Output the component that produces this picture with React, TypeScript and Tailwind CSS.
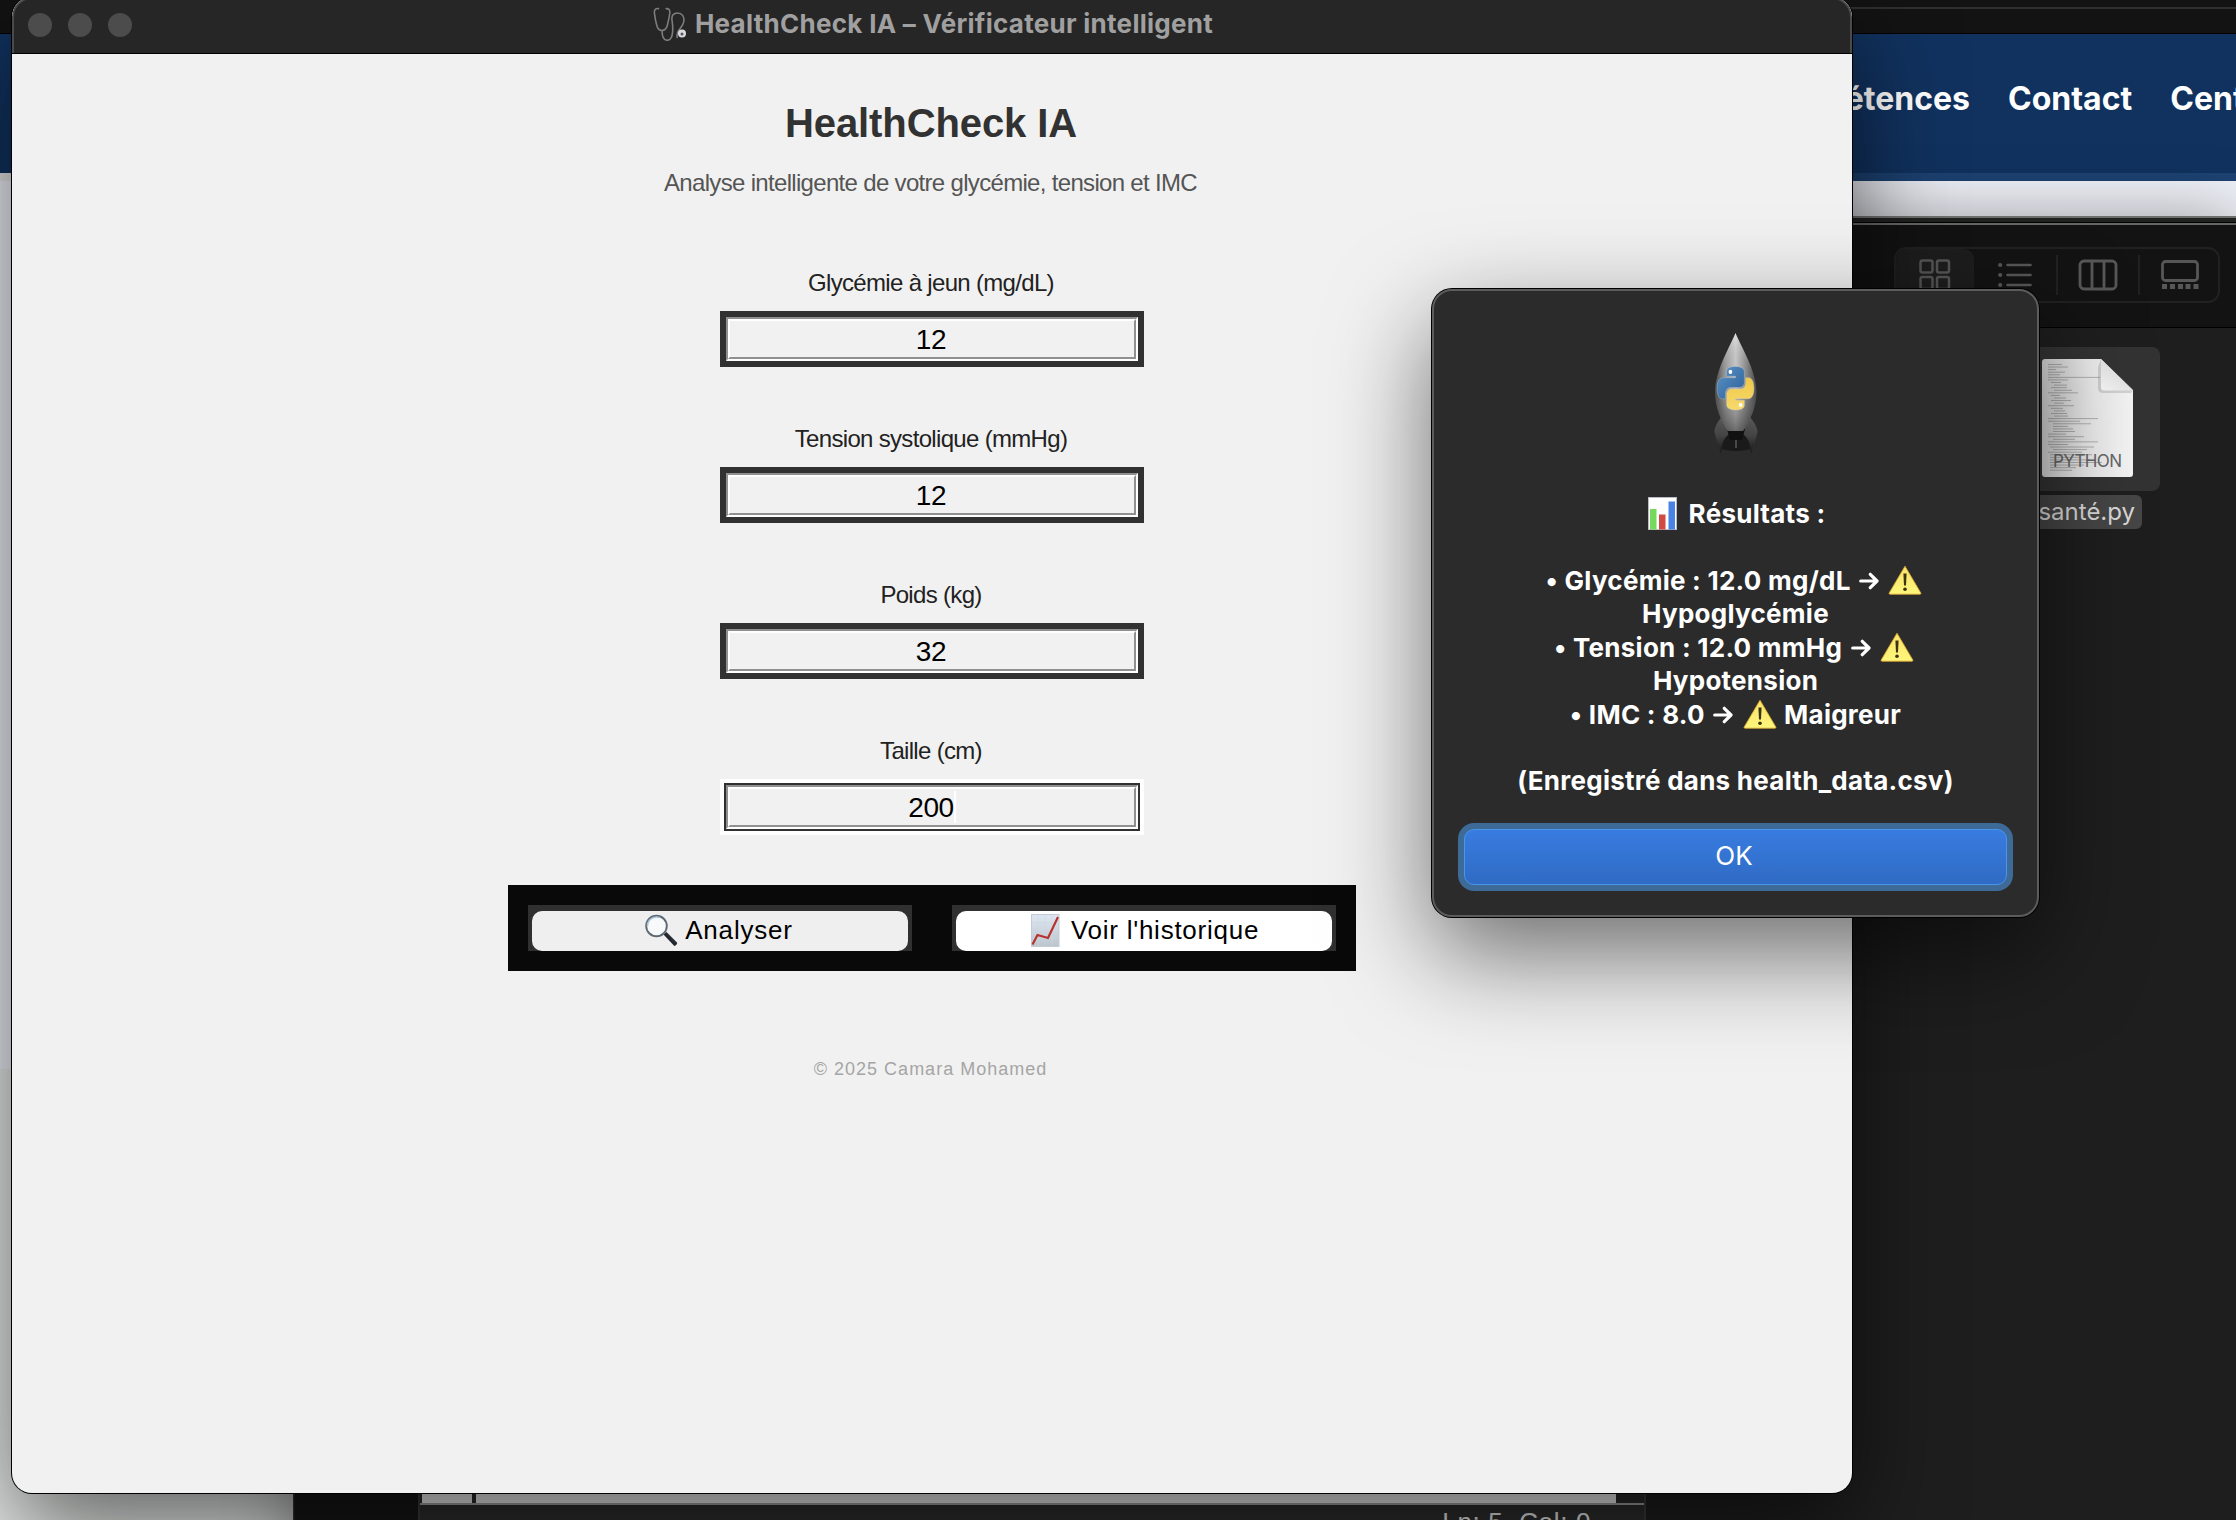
import type { ReactNode } from 'react';

const helv = "font-['Liberation_Sans',Arial,sans-serif]";
const inter = "font-['Inter',sans-serif]";

function Stethoscope() {
  return (
    <svg width="34" height="34" viewBox="0 0 34 34" fill="none" className="-mt-[1px] shrink-0">
      <g stroke="#7d7d7d" strokeWidth="1.6" strokeLinecap="round">
        <path d="M5.500 1.600C2.500 1.200 1 3 1.400 6c.6 4 1 8 2.300 12 .8 3.500 3 5.500 5.200 5.500 2.500 0 4.700-2 5.500-5.500 1-4.500 2-8 2.400-12 .3-3-1-4.600-3.600-4.400" />
        <path d="M9.200 23.500c-.4 6 1.600 9.800 5 9.800 3.300 0 5-3 5.400-8.300.4-5 0-8-.6-12-.6-4.500 1.500-7 5.500-7 4.500 0 7 3.500 6.300 8.500-.6 4-3.500 6-5.400 9.500-1.600 3-1.600 4.500-1.200 6.500" />
      </g>
      <circle cx="29" cy="26.500" r="4" fill="#d9dade" />
      <circle cx="29" cy="27" r="1.500" fill="#55575e" />
    </svg>
  );
}

function Magnifier() {
  return (
    <svg width="33" height="33" viewBox="0 0 33 33" fill="none" className="shrink-0">
      <defs>
        <linearGradient id="handle" x1="0" y1="1" x2="1" y2="0">
          <stop offset="0" stopColor="#05070c" />
          <stop offset=".6" stopColor="#2b3038" />
          <stop offset="1" stopColor="#767c86" />
        </linearGradient>
      </defs>
      <path d="M18.500 20.500l3-2.500 10.500 10.500c.8 1-1.700 4-2.900 3.300z" fill="url(#handle)" />
      <circle cx="11.500" cy="12" r="10.300" fill="#f7f9fa" stroke="#5d6a75" strokeWidth="1.900" />
      <path d="M2.500 12a9 9 0 0 1 12-8.500" stroke="#a9c4d8" strokeWidth="1.500" />
    </svg>
  );
}

function TrendChart() {
  return (
    <svg width="29" height="33" viewBox="0 0 29 33" fill="none" className="shrink-0">
      <defs>
        <linearGradient id="sheet" x1="0" y1="0" x2="0" y2="1">
          <stop offset="0" stopColor="#dfe8f2" />
          <stop offset="1" stopColor="#bcc4cc" />
        </linearGradient>
      </defs>
      <rect x=".5" y=".5" width="27.500" height="32" fill="url(#sheet)" stroke="#c3ccd6" />
      <path d="M7 1v31M14 1v31M21 1v31M1 8.500h27M1 16.500h27M1 24.500h27" stroke="#ccd6e0" strokeWidth=".5" />
      <path d="M1.500 30.500L6.500 21l10.500 3L27 3" stroke="#b8332f" strokeWidth="2.200" />
    </svg>
  );
}

function BarChart() {
  return (
    <svg width="29" height="33" viewBox="0 0 29 33" className="shrink-0">
      <rect x=".5" y=".5" width="28" height="32" fill="#fff" stroke="#b9bcc2" />
      <rect x="2" y="12" width="6.500" height="20.500" fill="#76d85d" />
      <rect x="11" y="17.500" width="6.500" height="15" fill="#d14b43" />
      <rect x="20.500" y="4.500" width="6.500" height="28" fill="#4a83e6" />
    </svg>
  );
}

function Warning() {
  return (
    <svg width="34" height="30" viewBox="0 0 34 30" className="mx-[1px] inline-block align-[-5px]">
      <defs>
        <linearGradient id="warn" x1="0" y1="0" x2="0" y2="1">
          <stop offset="0" stopColor="#fbe36a" />
          <stop offset="1" stopColor="#fff67c" />
        </linearGradient>
      </defs>
      <path d="M17 1.200L32.800 28a.8.8 0 0 1-.7 1.200H1.900a.8.8 0 0 1-.7-1.200z" fill="url(#warn)" stroke="#d9a932" strokeWidth=".9" strokeLinejoin="round" />
      <path d="M15.400 8.500h3.200l-.6 12h-2z" fill="#3a3412" />
      <circle cx="17" cy="24.300" r="1.800" fill="#3a3412" />
    </svg>
  );
}

function Arrow() {
  return (
    <svg width="20" height="18" viewBox="0 0 20 18" fill="none" stroke="#fff" strokeWidth="3.200" strokeLinecap="round" strokeLinejoin="round" className="mx-[2px] inline-block align-[0px]">
      <path d="M1.700 9h16M11.300 2.300L18 9l-6.700 6.700" />
    </svg>
  );
}

function Rocket() {
  return (
    <svg width="48" height="124" viewBox="0 0 48 124">
      <defs>
        <linearGradient id="hull" x1="0" y1="0" x2="1" y2="0">
          <stop offset="0" stopColor="#4a4a4a" />
          <stop offset=".25" stopColor="#9b9b9b" />
          <stop offset=".5" stopColor="#c9c9c9" />
          <stop offset=".7" stopColor="#979797" />
          <stop offset="1" stopColor="#484848" />
        </linearGradient>
        <linearGradient id="shade" x1="0" y1="0" x2="0" y2="1">
          <stop offset="0" stopColor="#fff" stopOpacity=".45" />
          <stop offset=".4" stopColor="#888" stopOpacity="0" />
          <stop offset="1" stopColor="#111" stopOpacity=".5" />
        </linearGradient>
        <linearGradient id="fin" x1="0" y1="0" x2="0" y2="1">
          <stop offset="0" stopColor="#585858" />
          <stop offset=".5" stopColor="#444" />
          <stop offset="1" stopColor="#161616" />
        </linearGradient>
        <linearGradient id="blue" x1="0" y1="0" x2="1" y2="1">
          <stop offset="0" stopColor="#5b94c8" />
          <stop offset="1" stopColor="#2d5f96" />
        </linearGradient>
        <linearGradient id="gold" x1="0" y1="0" x2="0" y2="1">
          <stop offset="0" stopColor="#efc84a" />
          <stop offset="1" stopColor="#f7da6a" />
        </linearGradient>
      </defs>
      <path d="M10 100h28l2 16c-6 4-26 4-32 0z" fill="#1a1a1a" />
      <path d="M9.500 85C5 91 2 96 2.500 100.500c1.500 7 4 13 6.500 21.500 1.500-9 .5-14 8-20l-1-4zM38 85c4.500 6 8 11 7.500 15.500-1.500 7-4 13-6.500 21.500-1.500-9-.5-14-8-20l1-4z" fill="url(#fin)" />
      <path d="M15 97h18l-3 11H18z" fill="#111" />
      <path d="M24 108v8" stroke="#5a5a5a" strokeWidth="1.500" />
      <path d="M23.500 1C19 13 3 38 3 60c0 16 6 28 13 39h15C38 88 44.500 76 44.500 60 44.500 38 28 13 23.500 1z" fill="url(#hull)" />
      <path d="M23.500 1C19 13 3 38 3 60c0 16 6 28 13 39h15C38 88 44.500 76 44.500 60 44.500 38 28 13 23.500 1z" fill="url(#shade)" />
      <g transform="translate(5 34.500) scale(.335 .395)" stroke="#c8cbd0" strokeWidth="1.500" strokeOpacity=".6">
        <path fill="url(#blue)" d="M54.900 0C26.900 0 28.600 12.100 28.600 12.100v12.600h26.700v3.800H18S0 26.500 0 54.700s15.700 27.200 15.700 27.200h9.300V68.800s-.5-15.700 15.400-15.700h26.500s14.900.2 14.900-14.400V14.600S84.100 0 54.900 0z" />
        <path fill="url(#gold)" d="M55.500 110.200c28 0 26.300-12.100 26.300-12.100V85.500H55.100v-3.800h37.300s18 2 18-26.200-15.700-27.200-15.700-27.200h-9.300v13.100s.5 15.700-15.400 15.700H43.500s-14.900-.2-14.900 14.400v24.100s-2.300 14.600 26.900 14.600z" />
        <circle cx="40" cy="13.500" r="5.500" fill="#fff" stroke="none" />
        <circle cx="70.500" cy="97" r="5.500" fill="#fff" stroke="none" />
      </g>
    </svg>
  );
}

const codeLines = [
  [6, 14], [6, 20], [6, 8], [6, 17], [6, 12], [6, 52], [6, 20], [9, 10], [12, 13], [9, 16], [12, 18], [6, 30], [9, 9], [12, 12],
  [9, 20], [12, 10], [6, 26], [9, 12], [12, 11], [9, 16], [12, 14], [6, 50], [6, 32], [11, 38], [11, 15], [11, 20], [11, 22],
  [6, 18], [6, 36], [11, 22], [6, 50], [6, 20], [8, 44], [11, 34], [6, 34], [8, 42], [8, 30], [8, 40], [8, 52], [8, 34], [8, 26], [8, 22],
];

function PythonFile() {
  return (
    <svg width="91" height="118" viewBox="0 0 91 118">
      <defs>
        <linearGradient id="paper" x1="0" y1="0" x2="1" y2="0">
          <stop offset="0" stopColor="#d8d8d8" />
          <stop offset=".5" stopColor="#ececec" />
          <stop offset="1" stopColor="#f4f4f4" />
        </linearGradient>
        <linearGradient id="fold" x1="0" y1="1" x2="1" y2="0">
          <stop offset="0" stopColor="#fbfbfb" />
          <stop offset="1" stopColor="#d0d0d0" />
        </linearGradient>
      </defs>
      <path d="M3 0h56l32 31v84a3 3 0 0 1-3 3H3a3 3 0 0 1-3-3V3a3 3 0 0 1 3-3z" fill="url(#paper)" />
      {codeLines.map(([x, w], i) => (
        <rect key={i} x={x} y={5 + i * 2.58} width={w} height=".9" fill="#777" opacity=".55" />
      ))}
      <path d="M56 8l3-8 32 31-2 3H61c-3 0-5-2-5-4z" fill="#888" opacity=".3" />
      <path d="M59 0l32 31.500H62a3 3 0 0 1-3-3z" fill="url(#fold)" />
      <text x="11" y="108" textLength="69" fontFamily="Inter" fontSize="17" fill="#666">PYTHON</text>
    </svg>
  );
}

function Field({ label, value, focused = false }: { label: string; value: string; focused?: boolean }) {
  return (
    <div className="flex flex-col items-center">
      <div className="pr-[2px] text-[24px] leading-[28px] tracking-[-0.68px] text-[#222]">{label}</div>
      <div className={focused ? 'mt-[14px] bg-white p-[4px]' : 'mt-[14px] bg-[#313131] p-[4px]'}>
        <div className="bg-[#313131] p-[2px]">
          <div className="border-2 border-t-[#909090] border-r-white border-b-white border-l-[#909090]">
            <div className="flex h-[40px] w-[408px] items-center justify-center border-2 border-t-white border-r-[#909090] border-b-[#909090] border-l-white bg-[#f1f1f1] pr-[2px]">
              <span className="pt-px text-[28px] leading-[35px] tracking-[-0.4px] text-black">{value}</span>
              {focused && <span className="-mr-[2px] h-[32px] w-[2px] bg-white" />}
            </div>
          </div>
        </div>
      </div>
    </div>
  );
}

function MacButton({ icon, label, pressed = false }: { icon: ReactNode; label: string; pressed?: boolean }) {
  return (
    <div className="h-[46px] w-[384px] bg-[#303030] px-[4px] pt-[6px]">
      <div className={`flex h-[40px] items-center justify-center rounded-[10px] pb-[2px] text-black ${pressed ? 'gap-[7px] bg-[#efefef] pr-[2px]' : 'gap-[11px] bg-white pl-[2px]'}`}>
        {icon}
        <span className={pressed ? 'text-[26px] leading-[36px] tracking-[0.8px]' : 'text-[26px] leading-[36px] tracking-[0.75px]'}>{label}</span>
      </div>
    </div>
  );
}

function MainWindow() {
  return (
    <div className={`absolute -top-[3px] left-[12px] flex h-[1496px] w-[1840px] flex-col overflow-hidden rounded-[20px] bg-[#f1f1f1] shadow-[0_0_0_1px_#000,0_36px_100px_rgba(0,0,0,0.6)] ${helv}`}>
      <div className="relative h-[57px] shrink-0 border-b border-black">
        <div className="flex h-[56px] items-center justify-center rounded-t-[20px] border-x-2 border-t-2 border-[#4a4a4a] bg-[#262626] pb-[4px] pl-[2px]">
          <div className="absolute top-[16px] left-[16px] flex gap-[16px]">
            <span className="size-[24px] rounded-full bg-[#4c4c4c]" />
            <span className="size-[24px] rounded-full bg-[#4c4c4c]" />
            <span className="size-[24px] rounded-full bg-[#4c4c4c]" />
          </div>
          <Stethoscope />
          <span className={`ml-[8px] text-[26px] leading-[40px] font-bold tracking-[0.28px] text-[#a0a0a0] ${inter}`}>HealthCheck IA – Vérificateur intelligent</span>
        </div>
      </div>
      <div className="flex flex-col items-center pt-[45px]">
        <h1 className="pr-[2px] text-[40px] leading-[48px] font-bold tracking-[-0.1px] text-[#323232]">HealthCheck IA</h1>
        <p className="mt-[22px] pr-[3px] text-[24px] leading-[28px] tracking-[-0.68px] text-[#555]">Analyse intelligente de votre glycémie, tension et IMC</p>
        <div className="mt-[72px] flex flex-col gap-[58px]">
          <Field label="Glycémie à jeun (mg/dL)" value="12" />
          <Field label="Tension systolique (mmHg)" value="12" />
          <Field label="Poids (kg)" value="32" />
          <Field label="Taille (cm)" value="200" focused />
        </div>
        <div className="mt-[50px] flex h-[86px] w-[848px] gap-[40px] bg-[#090909] p-[20px]">
          <MacButton icon={<Magnifier />} label="Analyser" pressed />
          <MacButton icon={<TrendChart />} label="Voir l'historique" />
        </div>
        <footer className="mt-[86px] pr-[3px] text-[18px] leading-[24px] tracking-[1px] text-[#a5a5a5]">© 2025 Camara Mohamed</footer>
      </div>
    </div>
  );
}

function Dialog() {
  return (
    <div className={`absolute top-[289px] left-[1432px] flex h-[628px] w-[607px] flex-col items-center rounded-[20px] border-2 border-[#5c5c5c] bg-[#2b2b2b] text-white shadow-[0_0_0_1px_#000,0_36px_100px_rgba(0,0,0,0.56)] ${inter}`}>
      <div className="mt-[41px] h-[122px]"><Rocket /></div>
      <div className="mt-[43px] flex w-full flex-col items-center text-[26px] leading-[33.4px] font-bold tracking-[0.26px] whitespace-pre">
        <div className="flex items-center gap-[12px] pl-[2px]"><BarChart /><span>Résultats :</span></div>
        <div> </div>
        <div className="h-[33.4px] pr-[2px]">• Glycémie : 12.0 mg/dL <Arrow /> <Warning /></div>
        <div className="pt-px leading-[32.4px]">Hypoglycémie</div>
        <div className="h-[33.4px] pr-[2px]">• Tension : 12.0 mmHg <Arrow /> <Warning /></div>
        <div>Hypotension</div>
        <div className="h-[33.4px] pt-px">• IMC : 8.0 <Arrow /> <Warning /> Maigreur</div>
        <div> </div>
        <div className="pt-px leading-[32.4px]">(Enregistré dans health_data.csv)</div>
      </div>
      <div className="mt-[25px] rounded-[16px] bg-[#3d6a96] p-[6px]">
        <button className="h-[56px] w-[543px] rounded-[10px] border border-[#4a96ea] bg-linear-to-b from-[#387ce0] to-[#2f6bc4] pr-[3px] pb-[2px] text-[26px] leading-[50px] font-normal">OK</button>
      </div>
    </div>
  );
}

function ViewSwitcher() {
  return (
    <div className="ml-[247px] flex h-[56px] w-[326px] rounded-[12px] border-2 border-[#212121] text-[#575757]">
      <div className="flex w-[78px] items-center justify-center rounded-[10px] bg-[#1e1e1e]">
        <svg width="32" height="32" viewBox="0 0 32 32" fill="none" stroke="currentColor" strokeWidth="2.500">
          <rect x="1.500" y="1.500" width="12" height="12" rx="2" />
          <rect x="18" y="1.500" width="12" height="12" rx="2" />
          <rect x="1.500" y="18" width="12" height="12" rx="2" />
          <rect x="18" y="18" width="12" height="12" rx="2" />
        </svg>
      </div>
      <div className="my-[6px] flex w-[84px] items-center justify-center border-r-2 border-[#212121]">
        <svg width="34" height="26" viewBox="0 0 34 26" fill="none" stroke="currentColor" strokeWidth="2.600" strokeLinecap="round">
          <path d="M9.500 3h23M9.500 13h23M9.500 23h23" />
          <path d="M2.200 3h.01M2.200 13h.01M2.200 23h.01" strokeWidth="4.200" />
        </svg>
      </div>
      <div className="my-[6px] flex w-[82px] items-center justify-center border-r-2 border-[#212121]">
        <svg width="40" height="32" viewBox="0 0 40 32" fill="none" stroke="currentColor" strokeWidth="2.800">
          <rect x="2" y="2" width="36" height="28" rx="4" />
          <path d="M14 2v28M26 2v28" />
        </svg>
      </div>
      <div className="flex w-[78px] items-center justify-center pl-px">
        <svg width="38" height="30" viewBox="0 0 38 30" fill="none" stroke="currentColor" strokeWidth="2.800">
          <rect x="1.500" y="1.500" width="35" height="19" rx="3" />
          <path d="M1 26.500h5M9 26.500h5M17 26.500h5M24.500 26.500h5M32.500 26.500h5" strokeWidth="5" />
        </svg>
      </div>
    </div>
  );
}

function Background() {
  return (
    <div className="absolute inset-0 flex flex-col">
      <div className="h-[33px] shrink-0 bg-[#131313] pt-[7px]"><div className="ml-[1800px] h-[2px] bg-[#2f2f2f]" /></div>
      <div className="h-px shrink-0 bg-black" />
      <nav className={`flex h-[139px] shrink-0 gap-[38px] bg-[#11325f] pt-[45px] pl-[1798px] text-[32px] leading-[40px] font-bold whitespace-nowrap text-white ${inter}`}>
        <span className="flex w-[172px] shrink-0 justify-end">Compétences</span>
        <span>Contact</span>
        <span>Cent</span>
      </nav>
      <div className="flex h-[8px] shrink-0">
        <div className="w-[293px] bg-[#e6e6e4]" />
        <div className="grow bg-[#1d4272]" />
      </div>
      <div className="h-[888px] shrink-0 bg-[#eff1f8]" />
      <div className="grow bg-[#e8ebe9]" />
    </div>
  );
}

function FinderWindow() {
  return (
    <div className="absolute top-[216px] left-[293px] flex h-[1400px] w-[1943px] flex-col border-l border-[#333] bg-[#1e1e1e] shadow-[0_0_60px_rgba(0,0,0,0.35)]">
      <div className="h-[6px] shrink-0 border-t-2 border-[#6e6e6e] bg-[#202220]" />
      <div className="h-px shrink-0 bg-black" />
      <div className="h-[2px] shrink-0 bg-[#666]" />
      <div className="h-[103px] shrink-0 border-b border-black bg-[#131313] pt-[22px] pl-[1353px]"><ViewSwitcher /></div>
      <div className={`flex flex-col items-end pt-[19px] pr-[76px] ${inter}`}>
        <div className="flex h-[144px] w-[145px] justify-center rounded-[8px] bg-[#333] pt-[12px]"><PythonFile /></div>
        <div className="mt-[4px] mr-[18px] h-[34px] rounded-[6px] bg-[#464646] pr-[7px] pl-[8px] text-[24px] leading-[34px] text-[#d8d8d8]">santé.py</div>
      </div>
    </div>
  );
}

function EditorWindow() {
  return (
    <>
      <div className="absolute top-[1400px] left-[295px] h-[120px] w-[1351px] bg-[#161616]" />
      <div className="absolute top-[1400px] left-[418px] flex h-[160px] w-[1228px] flex-col border-x-2 border-[#3a3a3a] bg-[#2b2b2b]">
        <div className="flex h-[103px] shrink-0 gap-[4px] pr-[28px] pl-[2px]">
          <div className="w-[50px] bg-[#f0f0f0]" />
          <div className="grow bg-[#f0f0f0]" />
        </div>
        <div className="h-[2px] shrink-0 bg-[#a0a0a0]" />
        <div className="flex grow justify-end bg-[#2d2d2d] pt-[2px] pr-[53px] text-[26px] leading-[30px] text-[#e6e6e6]">
          <span className={`tracking-[0.65px] whitespace-pre ${helv}`}>Ln: 5  Col: 0</span>
        </div>
      </div>
    </>
  );
}

export default function App() {
  return (
    <div className="relative h-[1520px] w-[2236px] overflow-hidden bg-[#1e1e1e]">
      <Background />
      <FinderWindow />
      <EditorWindow />
      <MainWindow />
      <Dialog />
    </div>
  );
}
